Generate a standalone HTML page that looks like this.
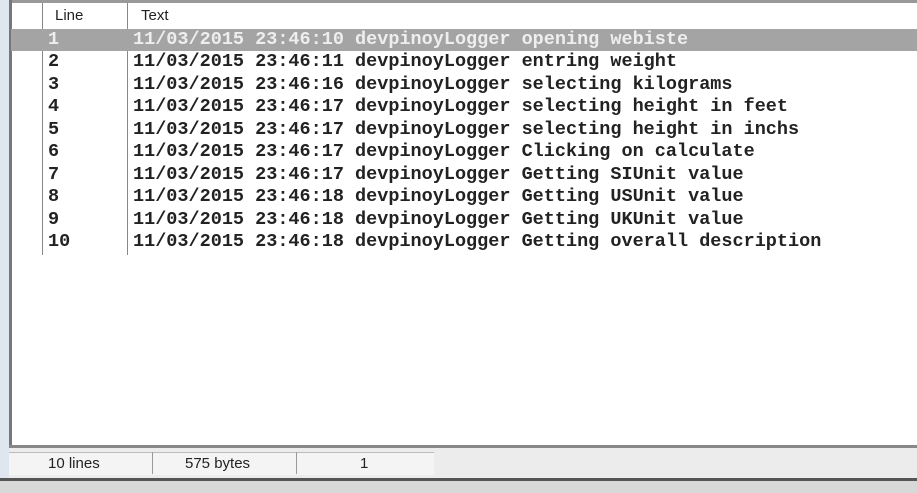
<html><head><style>
body{margin:0;width:917px;height:493px;overflow:hidden;background:#fff;position:relative;font-family:"Liberation Sans",sans-serif}
.abs{position:absolute}
.row{position:absolute;left:11px;right:0;height:22px;font-family:"Liberation Mono",monospace;font-size:18.5px;font-weight:bold;color:#222;line-height:22px;white-space:pre}
.row .n{position:absolute;left:37px}
.row .t{position:absolute;left:122px}
</style></head><body>
<div class="abs" style="left:0;top:0;width:9px;height:493px;background:#dfe6ee"></div>
<div class="abs" style="left:9px;top:0;width:3px;height:480px;background:#777"></div>
<div class="abs" style="left:12px;top:0;right:0;height:3px;background:#999"></div>
<div class="abs" style="left:12px;top:3px;right:0;height:26px;background:#fff;border-bottom:1px solid #ddd"></div>
<div class="abs" style="left:55px;top:7px;font-size:15px;color:#222">Line</div>
<div class="abs" style="left:141px;top:7px;font-size:15px;color:#222">Text</div>
<div class="abs" style="left:42px;top:3px;width:1px;height:252px;background:#888"></div>
<div class="abs" style="left:127px;top:3px;width:1px;height:252px;background:#888"></div>
<div class="row" style="top:29px;background:#a4a4a4;color:#eee"><span class="n">1</span><span class="t">11/03/2015 23:46:10 devpinoyLogger opening webiste</span></div>
<div class="row" style="top:51px"><span class="n">2</span><span class="t">11/03/2015 23:46:11 devpinoyLogger entring weight</span></div>
<div class="row" style="top:73.5px"><span class="n">3</span><span class="t">11/03/2015 23:46:16 devpinoyLogger selecting kilograms</span></div>
<div class="row" style="top:96px"><span class="n">4</span><span class="t">11/03/2015 23:46:17 devpinoyLogger selecting height in feet</span></div>
<div class="row" style="top:118.5px"><span class="n">5</span><span class="t">11/03/2015 23:46:17 devpinoyLogger selecting height in inchs</span></div>
<div class="row" style="top:141px"><span class="n">6</span><span class="t">11/03/2015 23:46:17 devpinoyLogger Clicking on calculate</span></div>
<div class="row" style="top:163.5px"><span class="n">7</span><span class="t">11/03/2015 23:46:17 devpinoyLogger Getting SIUnit value</span></div>
<div class="row" style="top:186px"><span class="n">8</span><span class="t">11/03/2015 23:46:18 devpinoyLogger Getting USUnit value</span></div>
<div class="row" style="top:208.5px"><span class="n">9</span><span class="t">11/03/2015 23:46:18 devpinoyLogger Getting UKUnit value</span></div>
<div class="row" style="top:231px"><span class="n">10</span><span class="t">11/03/2015 23:46:18 devpinoyLogger Getting overall description</span></div>
<div class="abs" style="left:9px;top:445px;right:0;height:3px;background:#888"></div>
<div class="abs" style="left:9px;top:448px;right:0;height:30px;background:#ececec"></div>
<div class="abs" style="left:9px;top:452px;width:425px;height:22px;background:#f4f4f4;border-top:1px solid #bbb"></div>
<div class="abs" style="left:152px;top:452px;width:1px;height:22px;background:#999"></div>
<div class="abs" style="left:296px;top:452px;width:1px;height:22px;background:#999"></div>
<div class="abs" style="left:48px;top:455px;font-size:15px;color:#222">10 lines</div>
<div class="abs" style="left:185px;top:455px;font-size:15px;color:#222">575 bytes</div>
<div class="abs" style="left:360px;top:455px;font-size:15px;color:#222">1</div>
<div class="abs" style="left:0;top:478px;right:0;height:3px;background:#555"></div>
<div class="abs" style="left:0;top:481px;right:0;height:12px;background:#d8d8d8"></div>
</body></html>
